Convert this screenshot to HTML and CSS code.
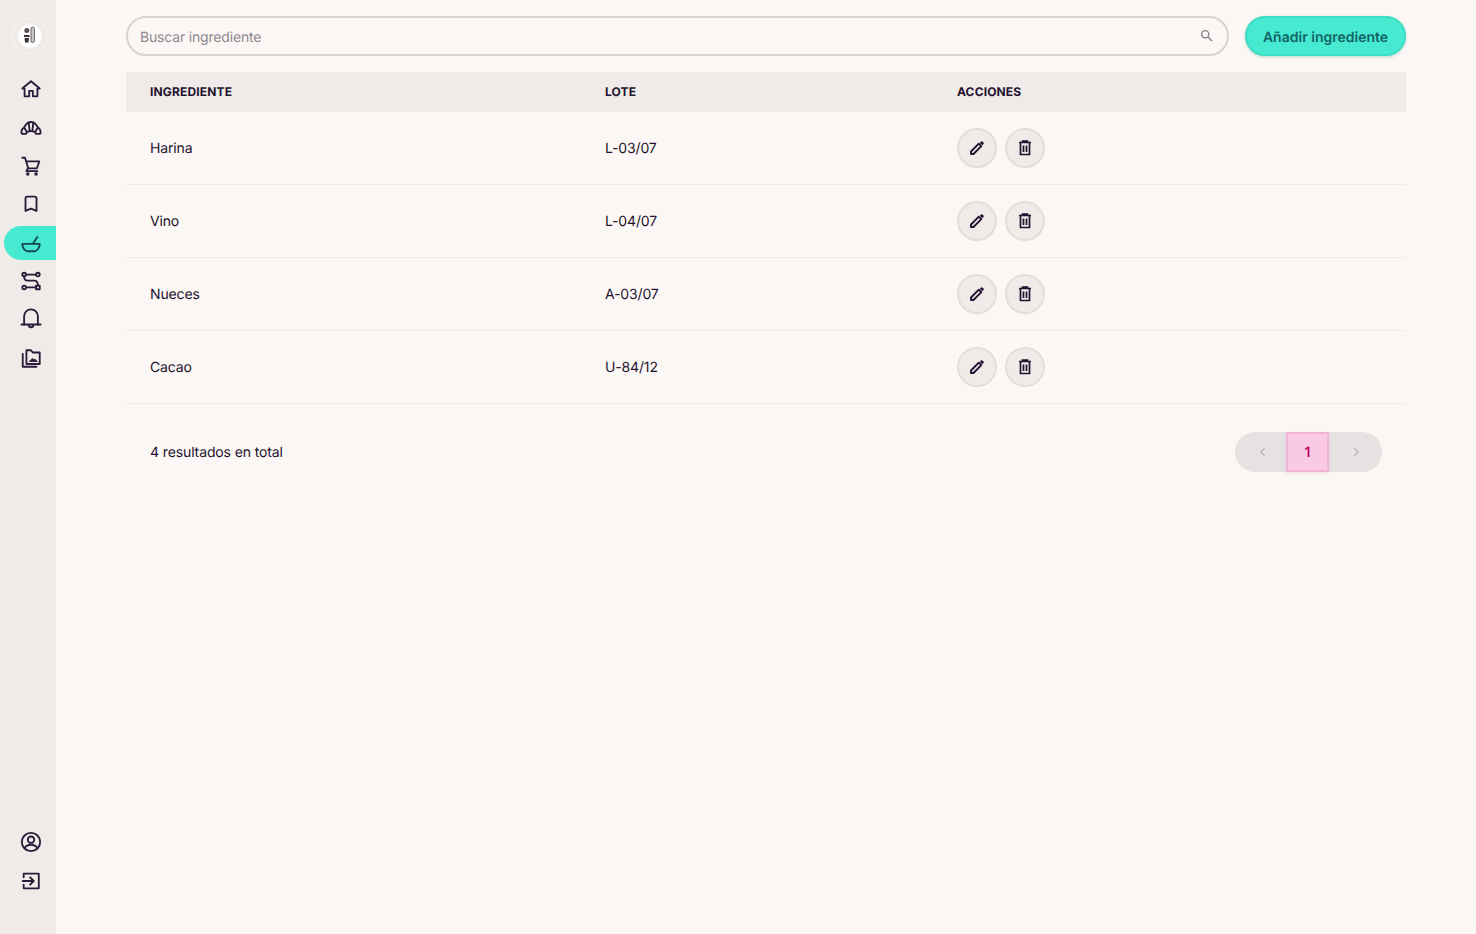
FILE: index.html
```html
<!DOCTYPE html>
<html lang="es">
<head>
<meta charset="utf-8">
<title>Ingredientes</title>
<link rel="stylesheet" href="styles.css">
</head>
<body>
<div class="app">
  <aside class="sidebar">
    <div class="logo">
      <svg viewBox="0 0 40 40" width="40" height="40">
        <circle cx="20" cy="20" r="17.5" fill="none" stroke="#fff" stroke-width="2.4" stroke-dasharray="1.1 2.1" opacity=".6"/>
        <circle cx="20" cy="20" r="11.7" fill="#fff"/>
        <circle cx="16.800" cy="14.500" r="2.500" fill="#5a5058"/>
        <path d="M14 19h5.500v2H14zM14.500 22h4.500l-.5 4.500h-3.500z" fill="#3a3038"/>
        <rect x="21" y="11" width="3.400" height="15.500" rx="1.700" fill="#cfcbcd" stroke="#5a5058" stroke-width=".9"/>
      </svg>
    </div>
    <nav class="nav">
      <a class="nav-item"><svg class="ico" viewBox="0 0 24 24"><path d="M2.500 11.500 12 3.500l9.500 8h-2.500v8.500h-5V14h-4v6h-5v-8.500z"/></svg></a>
      <a class="nav-item"><svg class="ico" viewBox="0 0 24 24"><path d="M1.500 18c0-3 1-4.500 3-5.500C6.500 8.500 9 6.500 12 6.500s5.500 2 7.500 6c2 1 3 2.500 3 5.500 0 1-1 1.500-2 1.500h-3l-1-2c-3-1.300-6-1.300-9 0l-1 2h-3c-1 0-2-.5-2-1.500z"/><path d="M4.500 12.500 7.500 17.500M19.500 12.500l-3 5M9.500 7 10.500 16.500M14.500 7 13.500 16.500"/></svg></a>
      <a class="nav-item"><svg class="ico" viewBox="0 0 24 24"><path d="M2.500 3h3l3.500 11.500h9.500L21 7H6.500"/><path d="M8.500 14.500 7 17.500h12"/><circle cx="8.500" cy="20.800" r=".9"/><circle cx="17.500" cy="20.800" r=".9"/></svg></a>
      <a class="nav-item"><svg class="ico" viewBox="0 0 24 24"><path d="M6 6a2 2 0 0 1 2-2h8a2 2 0 0 1 2 2v13.500l-6-2.500-6 2.500V6z"/></svg></a>
      <a class="nav-item active"><svg class="ico" viewBox="0 0 24 24"><path d="M2.500 13h19c0 4-3 8-6 8h-7c-3 0-6-4-6-8z"/><path d="M14.500 12 19 5.500"/></svg></a>
      <a class="nav-item"><svg class="ico" viewBox="0 0 24 24"><circle cx="4.500" cy="5" r="2"/><circle cx="19.500" cy="5" r="2"/><circle cx="4.500" cy="19" r="2"/><rect x="17.500" y="17" width="4" height="4"/><path d="M6.500 5h11M6.500 19h11M4.500 7c0 3 1 4.500 4 4.500h7c3 0 4 2 4 5.500"/></svg></a>
      <a class="nav-item"><svg class="ico" viewBox="0 0 24 24"><path d="M4.500 18V9a7.500 7.500 0 0 1 15 0v9"/><path d="M1.500 18h21"/><path d="M9.500 18.500a2.500 2.500 0 0 0 5 0"/></svg></a>
      <a class="nav-item"><svg class="ico" viewBox="0 0 24 24"><path d="M7 5.500V3.500h5l2 2.500h7.500v12.500H7z"/><path d="M3 7.500v14h15"/><path d="M10.500 15.500l3-3 1.500 1.500 1-1 2.500 2.500z" class="fill"/></svg></a>
    </nav>
    <div class="nav nav-bottom">
      <a class="nav-item"><svg class="ico" viewBox="0 0 24 24"><circle cx="12" cy="12" r="10"/><circle cx="12" cy="9.500" r="3.500"/><path d="M5 18.500c2-3 4.500-3.500 7-3.500s5 .5 7 3.500"/></svg></a>
      <a class="nav-item"><svg class="ico" viewBox="0 0 24 24"><path d="M4 8V4h16.500v16H4v-4"/><path d="M3 12h12M11 8l4 4-4 4"/></svg></a>
    </div>
  </aside>

  <main class="main">
    <div class="toolbar">
      <label class="search">
        <input class="search-input" type="text" placeholder="Buscar ingrediente">
        <svg class="search-ico" viewBox="0 0 12 12"><circle cx="4.800" cy="4.800" r="3.300"/><path d="M7.300 7.300 11 11"/></svg>
      </label>
      <button class="btn-add">Añadir ingrediente</button>
    </div>

    <table class="table">
      <thead>
        <tr><th class="c1">Ingrediente</th><th class="c2">Lote</th><th class="c3">Acciones</th></tr>
      </thead>
      <tbody>
        <tr><td class="txt">Harina</td><td class="txt">L-03/07</td><td><div class="actions"><button class="act"><svg viewBox="0 0 16 16"><path class="pen" d="M2 14v-2.500L9.800 3.700l2.500 2.500L4.500 14z"/><path class="tip" d="M10.800 2.700l1.200-1.200a1 1 0 0 1 1.400 0l1.100 1.100a1 1 0 0 1 0 1.400l-1.200 1.200z"/></svg></button><button class="act"><svg viewBox="0 0 16 16"><path class="bin" d="M2 2.500h12M3.500 2.500v12h9v-12M6.500 5.500v6.500M9.500 5.500v6.500M5.500 2V1h5v1"/></svg></button></div></td></tr>
        <tr><td class="txt">Vino</td><td class="txt">L-04/07</td><td><div class="actions"><button class="act"><svg viewBox="0 0 16 16"><path class="pen" d="M2 14v-2.500L9.800 3.700l2.500 2.500L4.500 14z"/><path class="tip" d="M10.800 2.700l1.200-1.200a1 1 0 0 1 1.400 0l1.100 1.100a1 1 0 0 1 0 1.400l-1.200 1.200z"/></svg></button><button class="act"><svg viewBox="0 0 16 16"><path class="bin" d="M2 2.500h12M3.500 2.500v12h9v-12M6.500 5.500v6.500M9.500 5.500v6.500M5.500 2V1h5v1"/></svg></button></div></td></tr>
        <tr><td class="txt">Nueces</td><td class="txt">A-03/07</td><td><div class="actions"><button class="act"><svg viewBox="0 0 16 16"><path class="pen" d="M2 14v-2.500L9.800 3.700l2.500 2.500L4.500 14z"/><path class="tip" d="M10.800 2.700l1.200-1.200a1 1 0 0 1 1.400 0l1.100 1.100a1 1 0 0 1 0 1.400l-1.200 1.200z"/></svg></button><button class="act"><svg viewBox="0 0 16 16"><path class="bin" d="M2 2.500h12M3.500 2.500v12h9v-12M6.500 5.500v6.500M9.500 5.500v6.500M5.500 2V1h5v1"/></svg></button></div></td></tr>
        <tr><td class="txt">Cacao</td><td class="txt">U-84/12</td><td><div class="actions"><button class="act"><svg viewBox="0 0 16 16"><path class="pen" d="M2 14v-2.500L9.800 3.700l2.500 2.500L4.500 14z"/><path class="tip" d="M10.800 2.700l1.200-1.200a1 1 0 0 1 1.400 0l1.100 1.100a1 1 0 0 1 0 1.400l-1.200 1.200z"/></svg></button><button class="act"><svg viewBox="0 0 16 16"><path class="bin" d="M2 2.500h12M3.500 2.500v12h9v-12M6.500 5.500v6.500M9.500 5.500v6.500M5.500 2V1h5v1"/></svg></button></div></td></tr>
      </tbody>
    </table>

    <div class="foot">
      <span class="total">4 resultados en total</span>
      <div class="pager">
        <button class="pg prev"><svg viewBox="0 0 12 12"><path d="M8 1.500 3.500 6 8 10.500"/></svg></button>
        <button class="pg current">1</button>
        <button class="pg next"><svg viewBox="0 0 12 12"><path d="M4 1.500 8.500 6 4 10.500"/></svg></button>
      </div>
    </div>
  </main>
</div>
</body>
</html>
```
FILE: styles.css
```css
* { box-sizing: border-box; }
html, body { margin: 0; height: 100%; }
body {
  background: #fbf7f4;
  color: #23122f;
  font-family: Inter, "Liberation Sans", sans-serif;
  font-size: 14px;
  line-height: 20px;
  text-rendering: geometricPrecision;
}
.app { display: flex; height: 934px; overflow: hidden; }

.sidebar {
  width: 56px;
  flex: none;
  background: #efebe8;
  display: flex;
  flex-direction: column;
  padding: 16px 0 36px 4px;
}
.logo { height: 40px; margin: 0 0 16px 6px; }
.logo svg { display: block; }
.nav { display: flex; flex-direction: column; gap: 4.4px; }
.nav-bottom { margin-top: auto; gap: 5px; }
.nav-item {
  height: 34px;
  display: flex;
  align-items: center;
  justify-content: center;
  padding-left: 2px;
  border-radius: 17px 0 0 17px;
}
.nav-item.active { background: #45ead0; color: #0e4f4f; }
.ico {
  width: 22px;
  height: 22px;
  fill: none;
  stroke: #2b1a38;
  stroke-width: 2;
  stroke-linejoin: round;
  stroke-linecap: round;
}
.active .ico { stroke: #134a52; }
.ico .fill { fill: #2b1a38; stroke-width: 1; }

.main { flex: 1; padding: 16px 70px 0; min-width: 0; }
.toolbar { display: flex; gap: 16px; }
.search { flex: 1; position: relative; display: block; }
.search-input {
  width: 100%;
  height: 40px;
  border: 2px solid #d8d3d2;
  border-radius: 20px;
  background: transparent;
  padding: 2px 40px 0 12px;
  font: 14px/20px Inter, "Liberation Sans", sans-serif;
  letter-spacing: -.18px;
  text-rendering: geometricPrecision;
  color: #23122f;
  outline: none;
}
.search-input::placeholder { color: #8f8792; opacity: 1; }
.search-ico {
  position: absolute;
  right: 16px;
  top: 13px;
  width: 13px;
  height: 13px;
  fill: none;
  stroke: #85808a;
  stroke-width: 1.300;
}
.btn-add {
  width: 161px;
  height: 40px;
  border: 2px solid #3ddcc3;
  border-radius: 20px;
  background: #45ead0;
  color: #146366;
  font: 600 14px/20px Inter, "Liberation Sans", sans-serif;
  text-rendering: geometricPrecision;
  box-shadow: 0 1px 3px rgba(40, 150, 135, .3);
  padding: 3px 0 0;
}

.table {
  width: 1280px;
  margin-top: 16px;
  border-collapse: separate;
  border-spacing: 0;
  table-layout: fixed;
}
.c1 { width: 455px; }
.c2 { width: 352px; }
.table th {
  height: 40px;
  padding: 0 24px;
  background: #efebe8;
  text-align: left;
  text-transform: uppercase;
  font-size: 12px;
  font-weight: 700;
  line-height: 16px;
  letter-spacing: .15px;
}
.table td {
  height: 73px;
  padding: 0 24px;
  border-bottom: 1px solid #efebe8;
}
.table td.txt { padding-top: 2px; letter-spacing: -.15px; }
.actions { display: flex; gap: 8px; }
.act {
  width: 40px;
  height: 40px;
  border: 2px solid #e2dedc;
  border-radius: 50%;
  background: #efebe8;
  display: flex;
  align-items: center;
  justify-content: center;
  padding: 0;
}
.act svg { width: 16px; height: 16px; }
.pen { fill: none; stroke: #23122f; stroke-width: 1.900; stroke-linejoin: round; }
.tip { fill: #23122f; }
.bin { fill: none; stroke: #23122f; stroke-width: 1.700; }

.foot {
  display: flex;
  align-items: center;
  justify-content: space-between;
  padding: 28px 24px 0;
}
.total { padding-top: 2px; letter-spacing: -.12px; }
.pager {
  display: flex;
  height: 40px;
  background: #e6e2e2;
  border-radius: 20px;
}
.pg {
  width: 53px;
  border: 0;
  background: none;
  padding: 0;
  display: flex;
  align-items: center;
  justify-content: center;
  font: 600 14px/20px Inter, "Liberation Sans", sans-serif;
  text-rendering: geometricPrecision;
}
.prev { width: 51px; padding-left: 4px; }
.next { padding-left: 1px; }
.pg svg { width: 10px; height: 10px; fill: none; stroke: #bdb8bb; stroke-width: 1.800; }
.pg.current {
  width: 43px;
  padding-top: 2px;
  background: #f9c9e5;
  border: 2px solid #efb4d6;
  color: #c2045f;
  box-shadow: 0 1px 3px rgba(200, 100, 160, .2);
}
```
